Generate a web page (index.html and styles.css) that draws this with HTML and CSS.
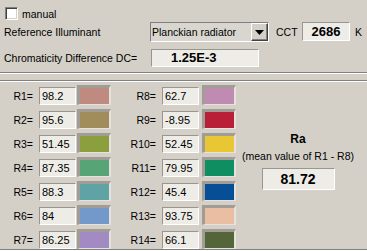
FILE: index.html
```html
<!DOCTYPE html>
<html lang="en">
<head>
    <meta charset="UTF-8">
    <title>Colour Rendering Index</title>
    <link rel="stylesheet" href="styles.css">
</head>
<body>
    <div class="top">
        <div class="row row-manual">
            <span class="check"></span>
            <span>manual</span>
        </div>
        <div class="row row-ref">
            <span class="lbl-ref">Reference Illuminant</span>
            <div class="combo">
                <span class="combo-text">Planckian radiator</span>
                <span class="combo-btn">
                    <svg width="9" height="5" viewBox="0 0 9 5"><polygon points="0,0 9,0 4.5,5" fill="#000"/></svg>
                </span>
            </div>
            <span class="cct-lbl">CCT</span>
            <span class="field cct">2686</span>
            <span class="unit">K</span>
        </div>
        <div class="row row-dc">
            <span class="lbl-dc">Chromaticity Difference DC=</span>
            <span class="field dc">1.25E-3</span>
        </div>
    </div>

    <div class="bottom">
        <div class="col col-a">
            <div class="r"><span class="name">R1=</span><span class="field val">98.2</span><span class="swatch c1"></span></div>
            <div class="r"><span class="name">R2=</span><span class="field val">95.6</span><span class="swatch c2"></span></div>
            <div class="r"><span class="name">R3=</span><span class="field val">51.45</span><span class="swatch c3"></span></div>
            <div class="r"><span class="name">R4=</span><span class="field val">87.35</span><span class="swatch c4"></span></div>
            <div class="r"><span class="name">R5=</span><span class="field val">88.3</span><span class="swatch c5"></span></div>
            <div class="r"><span class="name">R6=</span><span class="field val">84</span><span class="swatch c6"></span></div>
            <div class="r"><span class="name">R7=</span><span class="field val">86.25</span><span class="swatch c7"></span></div>
        </div>
        <div class="col col-b">
            <div class="r"><span class="name">R8=</span><span class="field val">62.7</span><span class="swatch c8"></span></div>
            <div class="r"><span class="name">R9=</span><span class="field val">-8.95</span><span class="swatch c9"></span></div>
            <div class="r"><span class="name">R10=</span><span class="field val">52.45</span><span class="swatch c10"></span></div>
            <div class="r"><span class="name">R11=</span><span class="field val">79.95</span><span class="swatch c11"></span></div>
            <div class="r"><span class="name">R12=</span><span class="field val">45.4</span><span class="swatch c12"></span></div>
            <div class="r"><span class="name">R13=</span><span class="field val">93.75</span><span class="swatch c13"></span></div>
            <div class="r"><span class="name">R14=</span><span class="field val">66.1</span><span class="swatch c14"></span></div>
        </div>
        <div class="ra">
            <div class="ra-title">Ra</div>
            <div class="ra-sub">(mean value of R1 - R8)</div>
            <div class="field ra-val">81.72</div>
        </div>
    </div>
</body>
</html>
```

FILE: styles.css
```css
/* panneau "Colour Rendering" facon Windows classique */
body {
    margin: 0;
    width: 367px;
    height: 251px;
    overflow: hidden;
    background-color: #d4d0c8;
    font-family: "Liberation Sans", Arial, sans-serif;
    font-size: 10.5px;
    color: #000;
}

.top {
    height: 65px;
    padding-top: 7px;
    padding-left: 4px;
    border-bottom: 1px solid #808080;
    box-shadow: 0 1px 0 #fff;
}

.row {
    display: flex;
    align-items: center;
}

.row-manual {
    height: 13px;
    padding-left: 1px;
}

.check {
    width: 13px;
    height: 13px;
    box-sizing: border-box;
    margin-right: 4px;
    background-color: #fff;
    border: 1px solid;
    border-color: #808080 #fff #fff #808080;
    box-shadow: inset 1px 1px 0 #404040, inset -1px -1px 0 #d4d0c8;
}

.row-ref {
    margin-top: 2px;
    height: 20px;
}

.lbl-ref {
    width: 146px;
}

.combo {
    display: flex;
    width: 119px;
    height: 20px;
    box-sizing: border-box;
    border: 1px solid;
    border-color: #808080 #fff #fff #808080;
    background-color: #d9d6cf;
}

.combo-text {
    flex: 1;
    padding-left: 1px;
    line-height: 18px;
}

.combo-btn {
    width: 17px;
    height: 18px;
    box-sizing: border-box;
    display: flex;
    align-items: center;
    justify-content: center;
    background-color: #d4d0c8;
    border: 1px solid;
    border-color: #fff #404040 #404040 #fff;
    box-shadow: inset -1px -1px 0 #808080;
}

.cct-lbl {
    margin-left: 7px;
    width: 26px;
}

.field {
    box-sizing: border-box;
    border: 1px solid;
    border-color: #99968f #fff #fff #99968f;
    background-color: #eeece6;
}

.cct {
    width: 48px;
    height: 19px;
    line-height: 17px;
    text-align: center;
    font-weight: bold;
    font-size: 13px;
    align-self: flex-start;
}

.unit {
    margin-left: 5px;
}

.row-dc {
    margin-top: 7px;
    height: 18px;
}

.lbl-dc {
    width: 147px;
}

.dc {
    width: 108px;
    height: 18px;
    line-height: 16px;
    padding-left: 19px;
    font-weight: bold;
    font-size: 13px;
}

/* valeurs R1..R14 */
.bottom {
    display: flex;
    margin-top: 7px;
    height: 168px;
    border-top: 1px solid #808080;
    border-bottom: 1px solid #808080;
    box-shadow: inset 0 1px 0 #fff, 0 1px 0 #fff;
}

.col {
    display: flex;
    flex-direction: column;
    gap: 4px;
    padding-top: 4px;
}

.r {
    display: flex;
    align-items: flex-end;
    height: 20px;
}

.name {
    height: 18px;
    line-height: 18px;
    text-align: right;
    margin-right: 6px;
}

.col-a .name {
    width: 33px;
}

.col-b .name {
    width: 45px;
}

.val {
    width: 37px;
    height: 18px;
    line-height: 16px;
    padding-left: 2px;
    font-size: 11px;
}

.swatch {
    width: 34px;
    height: 20px;
    box-sizing: border-box;
    border-style: solid;
    border-width: 3px 2px 1px 3px;
    border-color: #a19d96 #e6e3dd #e6e3dd #a19d96;
}

.col-a .swatch {
    margin-left: 1px;
}

.col-b .swatch {
    margin-left: 3px;
}

.c1 { background-color: #bf8a80; }
.c2 { background-color: #a18c5c; }
.c3 { background-color: #8b9f3f; }
.c4 { background-color: #57a577; }
.c5 { background-color: #5fa3a4; }
.c6 { background-color: #7299c9; }
.c7 { background-color: #a28bc3; }
.c8 { background-color: #c08bb3; }
.c9 { background-color: #b91f36; }
.c10 { background-color: #e9c734; }
.c11 { background-color: #0e8e61; }
.c12 { background-color: #064f96; }
.c13 { background-color: #eabea2; }
.c14 { background-color: #55653a; }

.ra {
    flex: 1;
    padding-right: 7px;
    display: flex;
    flex-direction: column;
    align-items: center;
}

.ra-title {
    margin-top: 51px;
    font-weight: bold;
    font-size: 12px;
    line-height: 14px;
}

.ra-sub {
    margin-top: 4px;
    line-height: 13px;
}

.ra-val {
    margin-top: 5px;
    width: 73px;
    height: 22px;
    line-height: 20px;
    text-align: center;
    font-weight: bold;
    font-size: 14px;
}
```
